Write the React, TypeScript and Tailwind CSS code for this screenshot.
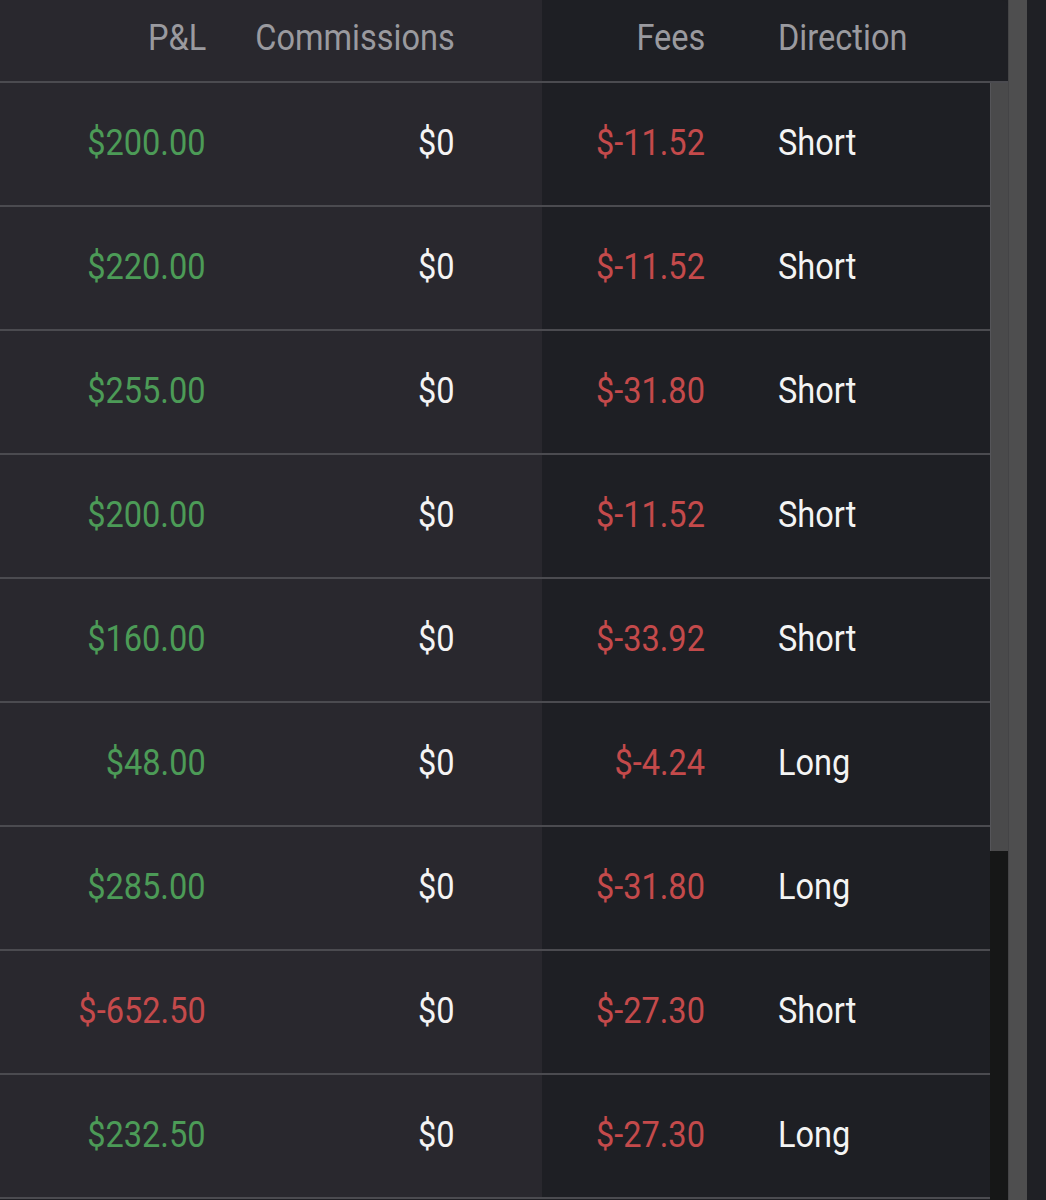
import React from "react";

type Trade = { pnl: string; fees: string; direction: "Short" | "Long" };

const trades: Trade[] = [
  { pnl: "$200.00", fees: "$-11.52", direction: "Short" },
  { pnl: "$220.00", fees: "$-11.52", direction: "Short" },
  { pnl: "$255.00", fees: "$-31.80", direction: "Short" },
  { pnl: "$200.00", fees: "$-11.52", direction: "Short" },
  { pnl: "$160.00", fees: "$-33.92", direction: "Short" },
  { pnl: "$48.00", fees: "$-4.24", direction: "Long" },
  { pnl: "$285.00", fees: "$-31.80", direction: "Long" },
  { pnl: "$-652.50", fees: "$-27.30", direction: "Short" },
  { pnl: "$232.50", fees: "$-27.30", direction: "Long" },
];

const Txt = ({ children, className = "", left = false }: { children: React.ReactNode; className?: string; left?: boolean }) => (
  <span className={`inline-block scale-x-[0.88] ${left ? "origin-left" : "origin-right"} ${className}`}>{children}</span>
);

const Header = () => (
  <div className="flex h-[83px] border-b-2 border-[#4b4b50] text-[37px] text-[#9a9a9f]">
    <div className="flex w-[542px] items-center bg-[#29282e] pb-[6px]">
      <div className="w-[206px] text-right">
        <Txt>P&amp;L</Txt>
      </div>
      <div className="w-[249px] text-right">
        <Txt>Commissions</Txt>
      </div>
    </div>
    <div className="flex flex-1 items-center rounded-tr-[6px] bg-[#1e1f24] pb-[6px]">
      <div className="w-[163px] text-right">
        <Txt>Fees</Txt>
      </div>
      <div className="pl-[73px]">
        <Txt left>Direction</Txt>
      </div>
    </div>
  </div>
);

const Row = ({ t }: { t: Trade }) => {
  const neg = t.pnl.startsWith("$-");
  return (
    <div className="flex h-[124px] border-b-2 border-[#4b4b50] text-[37px]">
      <div className="flex w-[542px] items-center bg-[#29282e] pb-[4px]">
        <div className={`w-[206px] text-right ${neg ? "text-[#c44a4b]" : "text-[#4c9b57]"}`}>
          <Txt>{t.pnl}</Txt>
        </div>
        <div className="w-[249px] text-right text-[#f4f4f4]">
          <Txt>$0</Txt>
        </div>
      </div>
      <div className="flex flex-1 items-center bg-[#1e1f24] pb-[4px]">
        <div className="w-[163px] text-right text-[#c44a4b]">
          <Txt>{t.fees}</Txt>
        </div>
        <div className="pl-[73px] text-[#f4f4f4]">
          <Txt left>{t.direction}</Txt>
        </div>
      </div>
    </div>
  );
};

export default function App() {
  return (
    <div
      className="flex h-[1200px] w-[1046px] overflow-hidden bg-[#1e1f24] leading-none"
      style={{ fontFamily: "Roboto, 'Noto Sans', sans-serif" }}
    >
      <div className="flex w-[1008px] flex-col">
        <Header />
        <div className="flex flex-1">
          <div className="w-[990px]">
            {trades.map((t, i) => (
              <Row key={i} t={t} />
            ))}
          </div>
          <div className="flex w-[18px] flex-col">
            <div className="h-[768px] border-l border-[#555559] bg-[#4a4a4b]" />
            <div className="flex-1 bg-[#161717]" />
          </div>
        </div>
      </div>
      <div className="w-[19px] border-l border-[#444446] bg-[#4e4e4f]" />
      <div className="flex-1 bg-[#1f2025]" />
    </div>
  );
}
